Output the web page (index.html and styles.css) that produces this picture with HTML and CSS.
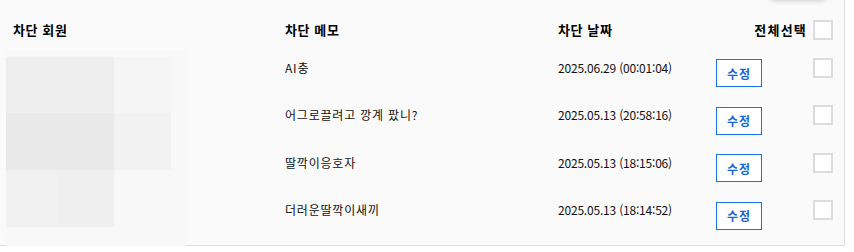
FILE: index.html
```html
<!DOCTYPE html>
<html lang="ko">
<head>
<meta charset="utf-8">
<title>차단 목록</title>
<link rel="stylesheet" href="styles.css">
</head>
<body>
<div class="panel">
  <div class="dropdown-shadow"></div>
  <div class="grid">
    <div class="th th-member">차단 회원</div>
    <div class="th">차단 메모</div>
    <div class="th">차단 날짜</div>
    <div class="th th-all">전체선택</div>
    <div class="th-check"><span class="check"></span></div>

    <div class="cell"></div>
    <div class="cell memo">AI충</div>
    <div class="cell date">2025.06.29 (00:01:04)</div>
    <div class="cell"><button class="edit">수정</button></div>
    <div class="cell"><span class="check"></span></div>

    <div class="cell"></div>
    <div class="cell memo">어그로끌려고 깡계 팠니?</div>
    <div class="cell date">2025.05.13 (20:58:16)</div>
    <div class="cell"><button class="edit">수정</button></div>
    <div class="cell"><span class="check"></span></div>

    <div class="cell"></div>
    <div class="cell memo">딸깍이응호자</div>
    <div class="cell date">2025.05.13 (18:15:06)</div>
    <div class="cell"><button class="edit">수정</button></div>
    <div class="cell"><span class="check"></span></div>

    <div class="cell"></div>
    <div class="cell memo">더러운딸깍이새끼</div>
    <div class="cell date">2025.05.13 (18:14:52)</div>
    <div class="cell"><button class="edit">수정</button></div>
    <div class="cell"><span class="check"></span></div>
  </div>
  <div class="blur">
    <div class="mosaic">
      <span class="m1"></span><span class="m1"></span><span class="m2"></span>
      <span class="m3"></span><span class="m3"></span><span class="m4"></span>
      <span class="m5"></span><span class="m6"></span><span class="m7"></span>
    </div>
  </div>
</div>
</body>
</html>
```
FILE: styles.css
```css
* { box-sizing: border-box; }
html, body { margin: 0; padding: 0; background: #ffffff; }
body {
  font-family: "Noto Sans CJK KR", "Noto Sans", sans-serif;
  color: #111;
}
.panel {
  position: relative;
  width: 845px;
  height: 246px;
  background: #fafafa;
  border-right: 1px solid #dedede;
  border-bottom: 1px solid #dedede;
}
.dropdown-shadow {
  position: absolute;
  left: 768px;
  top: -30px;
  width: 60px;
  height: 30px;
  border-radius: 8px;
  background: #fafafa;
  box-shadow: 0 1px 5px rgba(0, 0, 0, 0.18);
}
.grid {
  display: grid;
  grid-template-columns: 285px 273px 158px 97px 20px;
  grid-template-rows: 44px repeat(4, 47.5px);
  align-items: center;
}
.th {
  align-self: end;
  padding-bottom: 4px;
  font-size: 13px;
  font-weight: 700;
  line-height: 20px;
  letter-spacing: 0.6px;
  color: #000;
}
.th-member { padding-left: 13px; }
.th-all { text-align: right; padding-right: 6px; letter-spacing: 1.2px; }
.th-check { align-self: end; padding-bottom: 4px; height: 24px; }
.cell { font-size: 12px; line-height: 18px; }
.memo { letter-spacing: 0.8px; }
.date { letter-spacing: -0.2px; }
.check {
  display: block;
  width: 20px;
  height: 20px;
  background: #fff;
  border: 2px solid #dcdcdc;
}
.edit {
  display: block;
  width: 46px;
  height: 28px;
  margin-top: 11px;
  padding: 0;
  background: #fff;
  border: 1px solid #1a73e8;
  color: #1766d6;
  font-family: inherit;
  font-size: 12px;
  font-weight: 700;
  letter-spacing: 1px;
}
.blur {
  position: absolute;
  left: 6px;
  top: 50px;
  width: 180px;
  height: 197px;
  background: #f8f8f8;
}
.mosaic {
  margin-top: 7px;
  display: grid;
  grid-template-columns: 51px 57px 57px;
  grid-template-rows: 56px 57px 57px;
}
.m1 { background: #eeeeee; }
.m2 { background: #f5f5f5; }
.m3 { background: #e9e9e9; }
.m4 { background: #f2f2f2; }
.m5 { background: #f1f1f1; }
.m6 { background: #efefef; }
.m7 { background: #f8f8f8; }
```
